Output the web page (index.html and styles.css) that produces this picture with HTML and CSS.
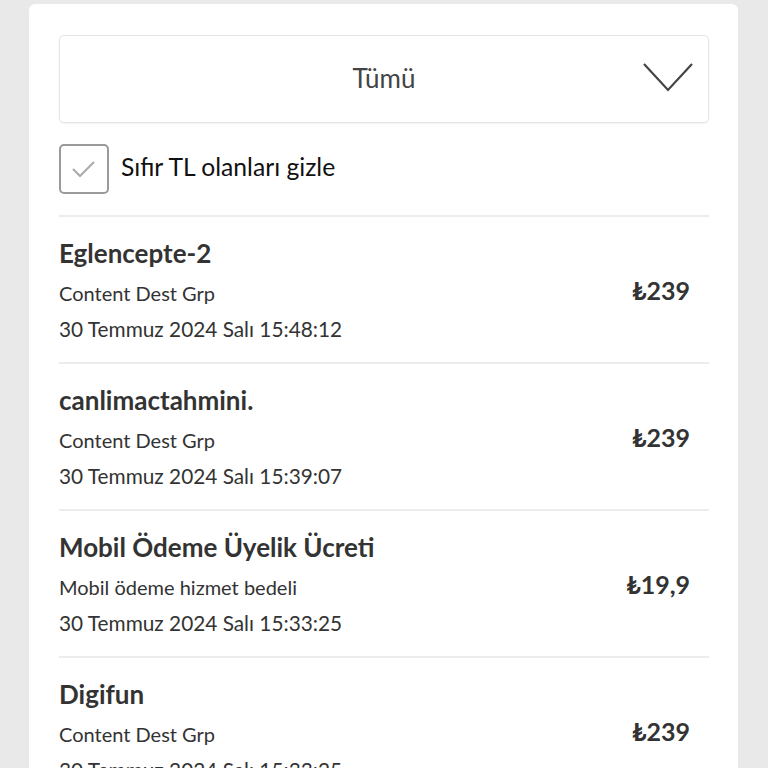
FILE: index.html
```html
<!DOCTYPE html>
<html lang="tr">
<head>
<meta charset="utf-8">
<link rel="stylesheet" href="styles.css">
</head>
<body>
<div class="card">
  <div class="select">
    <span class="select-text">Tümü</span>
    <svg class="chevron" width="52" height="32" viewBox="0 0 52 32"><path d="M2 2 L26 28 L50 2" fill="none" stroke="#444" stroke-width="2.2"/></svg>
  </div>
  <label class="check">
    <span class="box"><svg width="30" height="24" viewBox="0 0 30 24"><path d="M4 12 L11 19 L25 5" fill="none" stroke="#aaa" stroke-width="2"/></svg></span>
    <span class="check-label">Sıfır TL olanları gizle</span>
  </label>
  <div class="list">
    <div class="row">
      <div class="info">
        <div class="title">Eglencepte-2</div>
        <div class="sub">Content Dest Grp</div>
        <div class="date">30 Temmuz 2024 Salı 15:48:12</div>
      </div>
      <div class="amount">₺239</div>
    </div>
    <div class="row">
      <div class="info">
        <div class="title">canlimactahmini.</div>
        <div class="sub">Content Dest Grp</div>
        <div class="date">30 Temmuz 2024 Salı 15:39:07</div>
      </div>
      <div class="amount">₺239</div>
    </div>
    <div class="row">
      <div class="info">
        <div class="title">Mobil Ödeme Üyelik Ücreti</div>
        <div class="sub">Mobil ödeme hizmet bedeli</div>
        <div class="date">30 Temmuz 2024 Salı 15:33:25</div>
      </div>
      <div class="amount">₺19,9</div>
    </div>
    <div class="row">
      <div class="info">
        <div class="title">Digifun</div>
        <div class="sub">Content Dest Grp</div>
        <div class="date">30 Temmuz 2024 Salı 15:33:25</div>
      </div>
      <div class="amount">₺239</div>
    </div>
  </div>
</div>
</body>
</html>
```
FILE: styles.css
```css
html, body {
  margin: 0;
  padding: 0;
  background: #e9e9e9;
  height: 768px;
  overflow: hidden;
}
body {
  font-family: Lato, "Liberation Sans", sans-serif;
  color: #333;
}
.card {
  margin: 4px 30px 0 29px;
  background: #fff;
  border-radius: 6px;
  padding: 31px 29px 0 30px;
  height: 800px;
}
.select {
  height: 86px;
  border: 1px solid #e4e4e4;
  border-radius: 5px;
  box-shadow: 0 1px 2px rgba(0,0,0,0.06);
  display: flex;
  align-items: center;
  justify-content: center;
  position: relative;
}
.select-text {
  font-size: 26px;
  font-weight: 400;
  color: #444;
  padding-bottom: 2px;
}
.chevron {
  position: absolute;
  right: 14px;
  top: 26px;
}
.check {
  display: flex;
  align-items: center;
  gap: 12px;
  margin-top: 21px;
  padding-bottom: 21px;
  border-bottom: 2px solid #ececec;
}
.box {
  width: 46px;
  height: 46px;
  border: 2px solid #9a9a9a;
  border-radius: 5px;
  display: flex;
  align-items: center;
  justify-content: center;
}
.check-label {
  font-size: 24.7px;
  color: #111;
  padding-bottom: 5px;
}
.row {
  display: flex;
  align-items: center;
  justify-content: space-between;
  height: 145px;
  border-bottom: 2px solid #ececec;
  padding-right: 19px;
}
.info {
  display: flex;
  flex-direction: column;
  gap: 11.5px;
}
.title {
  font-size: 26px;
  line-height: 31px;
  font-weight: 700;
  color: #333;
}
.sub {
  font-size: 20px;
  line-height: 24px;
  color: #333;
}
.date {
  font-size: 20.8px;
  line-height: 25px;
  color: #333;
}
.amount {
  font-size: 25px;
  font-weight: 700;
  color: #333;
}
```
